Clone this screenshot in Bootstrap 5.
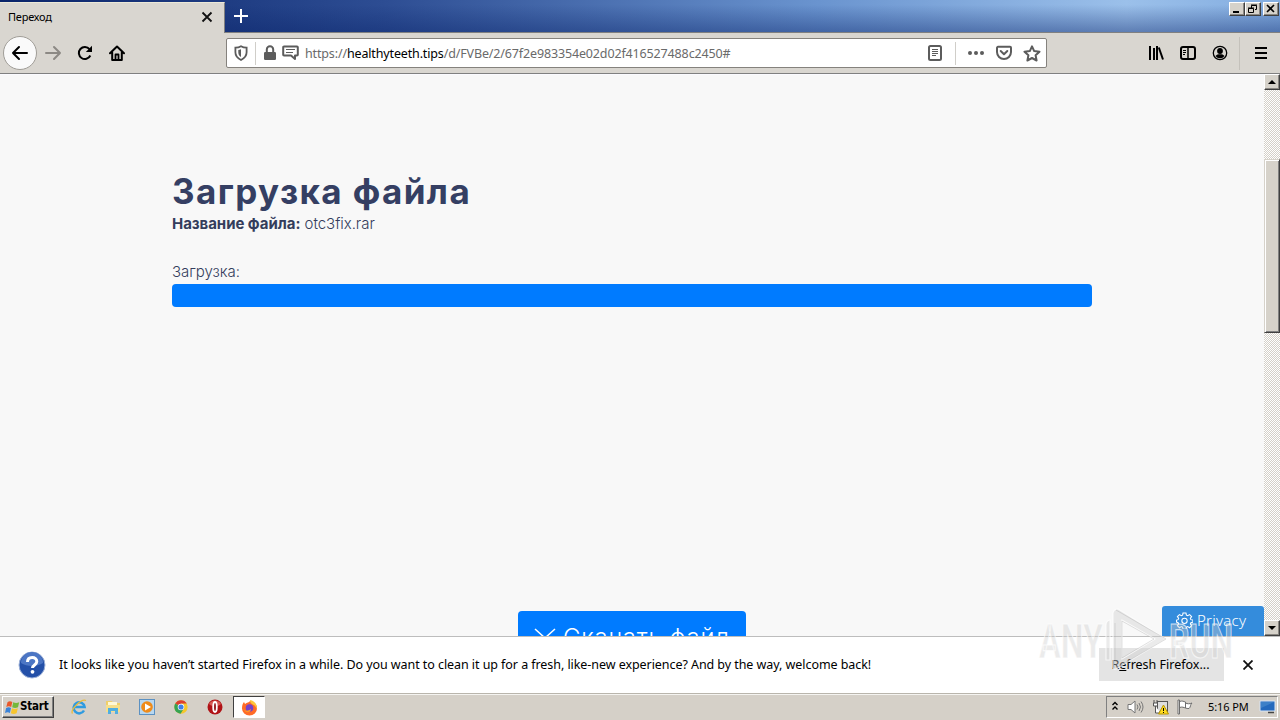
<!DOCTYPE html>
<html lang="ru">
<head>
    <meta charset="UTF-8">
    <title>Переход</title>
    <link href="https://cdn.jsdelivr.net/npm/bootstrap@5.3.3/dist/css/bootstrap.min.css" rel="stylesheet">
    <style>
        body {
            width: 1280px;
            height: 720px;
            background: #d9d6d0;
            color: #000;
            font-family: "Noto Sans", "Liberation Sans", sans-serif;
            font-size: 12px;
            line-height: 1.2;
        }
        svg {
            display: block;
            flex: none;
        }

        /* window title bar */
        .titlebar {
            height: 33px;
            background: linear-gradient(180deg, rgba(10,36,106,0) 15%, rgba(10,36,106,.42) 100%), linear-gradient(90deg, #0a246a, #2d4d93 30%, #6a94cf 64%, #9bc0ea 88%, #83ade0);
            border-bottom: 1px solid #808080;
        }
        .page-tab {
            width: 225px;
            height: 31px;
            margin-top: 2px;
            margin-bottom: -1px;
            padding: 0 11px 2px 8px;
            background: #d9d6d0;
            border-right: 1px solid #808080;
            border-top: 1px solid #ece9d8;
        }
        .tab-title {
            font-size: 11px;
            letter-spacing: -.2px;
        }
        .win-btns {
            margin: 2px 1px 0 0;
        }
        .win-btn, .scroll-btn {
            background: #d6d2ca;
            border: 1px solid;
            border-color: #fff #404040 #404040 #fff;
            box-shadow: inset -1px -1px #8a8782;
        }
        .win-btn {
            width: 16px;
            height: 14px;
        }
        .win-close {
            margin-left: 2px;
        }

        /* navigation bar */
        .toolbar {
            height: 41px;
            border-bottom: 1px solid #808080;
        }
        .back-btn {
            width: 34px;
            height: 34px;
            margin-left: 3px;
            border: 1px solid #a09d97;
            border-radius: 50%;
            background: #fafafa;
        }
        .forward-icon {
            margin-left: 7px;
        }
        .reload-icon {
            margin-left: 15px;
        }
        .url-bar {
            width: 821px;
            height: 30px;
            margin-left: 101px;
            padding: 0 5px 0 6px;
            background: #fff;
            border: 1px solid #85827d;
            border-radius: 2px;
            color: #6a6a6a;
        }
        .url-text {
            font-size: 12.5px;
            letter-spacing: -.145px;
            margin-left: 6px;
        }
        .sep {
            width: 1px;
            height: 23px;
            background: #d0cec9;
        }
        .sep-shield {
            margin: 0 6px;
        }
        .sep-actions {
            margin: 0 12px;
        }
        .pocket-icon {
            margin: 0 11px 0 12px;
        }
        .library-icon {
            margin-left: 101px;
        }
        .sep-menu {
            height: 33px;
            margin: 0 15px 0 11px;
            background: #c4c1bb;
        }

        /* page */
        .viewport {
            height: 562px;
        }
        .site {
            background: #f8f8f8;
            border-top: 1px solid #fbfbff;
            color: #343d5c;
            font-family: "Inter", "Open Sans", sans-serif;
            font-size: 15px;
            font-weight: 300;
        }
        .site-inner {
            width: 920px;
            padding-top: 95px;
        }
        .site h1 {
            margin: 0;
            font-size: 35px;
            font-weight: 700;
            letter-spacing: 1.4px;
            line-height: 42px;
            color: #353f63;
        }
        .file-line {
            line-height: 24px;
            letter-spacing: -.04px;
        }
        .load-bar {
            height: 23px;
            border-radius: 4px;
        }
        .load-bar .progress-bar {
            background: #007bff;
        }
        .download-btn {
            width: 228px;
            height: 54px;
            margin-top: 304px;
            padding: 0 15px;
            border: 0;
            border-radius: 4px;
            background: #007bff;
            color: #fff;
            font-size: 24px;
            font-weight: 300;
            letter-spacing: .75px;
            line-height: 54px;
        }
        .download-label {
            margin-left: 6px;
        }
        .privacy-tab {
            right: 0;
            bottom: 0;
            width: 102px;
            height: 30px;
            padding: 0 0 2px 14px;
            border-radius: 3px 3px 0 0;
            background: #348cdc;
            color: #fff;
            font-family: "Noto Sans", sans-serif;
            font-size: 15px;
            letter-spacing: .25px;
        }

        .scroll-track {
            width: 16px;
            background: repeating-conic-gradient(#d4d0c8 0 25%, #fff 0 50%) 0 0 / 2px 2px;
        }
        .scroll-btn {
            width: 16px;
            height: 16px;
        }
        .scroll-thumb {
            height: 174px;
            margin-top: 69px;
            background: #d6d2ca;
            border: 1px solid;
            border-color: #d6d2ca #404040 #404040 #d6d2ca;
            box-shadow: inset 1px 1px #fff, inset -1px -1px #808080;
        }

        /* notification */
        .notice {
            height: 57px;
            background: #fff;
            border-top: 1px solid #bdbdbd;
            padding: 0 27px 1px 18px;
        }
        .notice-text {
            margin-left: 13px;
            font-size: 12.5px;
            letter-spacing: -.062px;
        }
        .refresh-btn {
            width: 125px;
            height: 33px;
            margin-right: 19px;
            padding-right: 2px;
            background: #e4e4e4;
            font-size: 12.5px;
        }

        /* taskbar */
        .taskbar {
            height: 27px;
            background: #d5d0c8;
            border-top: 1px solid #b9b5ac;
            box-shadow: inset 0 1px #f5f4f1;
            padding: 2px 2px 0;
        }
        .start-btn {
            width: 52px;
            height: 22px;
            padding-left: 2px;
            border: 1px solid;
            border-color: #fff #404040 #404040 #fff;
            box-shadow: inset -1px -1px #808080;
            font-family: "DejaVu Sans Condensed", "DejaVu Sans", sans-serif;
            font-weight: 700;
            font-size: 11.5px;
            letter-spacing: -.2px;
        }
        .quick-launch {
            height: 21px;
            margin: 0 10px 0 17px;
            gap: 18px;
        }
        .active-task {
            width: 32px;
            height: 22px;
            background: #fff;
            border: 1px solid;
            border-color: #404040 #fff #fff #404040;
        }
        .tray {
            width: 172px;
            height: 22px;
            padding: 0 1px 0 4px;
            gap: 8px;
            border: 1px solid;
            border-color: #808080 #fff #fff #808080;
        }
        .clock {
            margin-left: 7px;
            font-size: 11px;
            letter-spacing: -.1px;
        }

        .brand-mark {
            left: 1034px;
            top: 606px;
            pointer-events: none;
        }
    </style>
</head>
<body class="d-flex flex-column overflow-hidden position-relative">

<header class="titlebar d-flex flex-shrink-0">
    <div class="page-tab d-flex align-items-center justify-content-between">
        <span class="tab-title">Переход</span>
        <svg width="12" height="12" viewBox="0 0 12 12" fill="none" stroke="#111" stroke-width="1.800"><path d="M1.500 1.500l9 9M10.500 1.500l-9 9"/></svg>
    </div>
    <svg class="ms-2 mt-2" width="16" height="16" viewBox="0 0 16 16" stroke="#fff" stroke-width="2"><path d="M8 1v14M1 8h14"/></svg>
    <div class="win-btns d-flex ms-auto">
        <div class="win-btn"><svg width="14" height="12"><path d="M3 9h6" stroke="#000" stroke-width="2"/></svg></div>
        <div class="win-btn"><svg width="14" height="12" fill="none" stroke="#000"><path d="M5.500 5V2.500h5v4H9M5 2h6M2.500 5.500h5v4h-5zM2 5h6"/></svg></div>
        <div class="win-btn win-close"><svg width="14" height="12"><path d="M3 2l7 7M10 2l-7 7" stroke="#000" stroke-width="1.600"/></svg></div>
    </div>
</header>

<nav class="toolbar d-flex align-items-center flex-shrink-0">
    <div class="back-btn d-flex align-items-center justify-content-center">
        <svg width="18" height="16" viewBox="0 0 18 16" fill="none" stroke="#000" stroke-width="2" stroke-linecap="round" stroke-linejoin="round"><path d="M16 8H2M8 2L2 8l6 6"/></svg>
    </div>
    <svg class="forward-icon" width="18" height="16" viewBox="0 0 18 16" fill="none" stroke="#8c8984" stroke-width="2" stroke-linecap="round" stroke-linejoin="round"><path d="M2 8h14M10 2l6 6-6 6"/></svg>
    <svg class="reload-icon" width="16" height="16" viewBox="0 0 16 16" fill="none" stroke="#000" stroke-width="2"><path d="M13.300 10.500A6 6 0 1 1 12.500 4.200"/><path d="M15 .8v6.200H8.800z" fill="#000" stroke="none"/></svg>
    <svg class="ms-3" width="16" height="16" viewBox="0 0 16 16" fill="none" stroke="#000" stroke-width="2" stroke-linecap="round" stroke-linejoin="round"><path d="M1 8.300L8 1.500l7 6.800M3.200 7.500V15h9.600V7.500"/><path d="M6.500 14V9.500h3V14" stroke-width="1.800"/></svg>
    <div class="url-bar d-flex align-items-center">
        <svg width="16" height="16" viewBox="0 0 16 16" fill="none" stroke="#5c5c5c" stroke-width="1.800"><path d="M8 1.200C6 2.500 4 2.700 2.400 2.700v4.600C2.400 11 5 13.500 8 15c3-1.500 5.600-4 5.600-7.700V2.700C12 2.700 10 2.500 8 1.200z"/><path d="M8 4.200C7 4.800 6 5 5.300 5v2.500C5.300 9.500 6.500 11 8 12z" fill="#5c5c5c" stroke="none"/></svg>
        <div class="sep sep-shield"></div>
        <svg width="16" height="16" viewBox="0 0 16 16"><rect x="2" y="7" width="12" height="8" rx="1.200" fill="#5c5c5c"/><path d="M4.800 8V4.500a3.200 3.200 0 0 1 6.400 0V8" fill="none" stroke="#5c5c5c" stroke-width="2"/></svg>
        <svg class="ms-1" width="17" height="16" viewBox="0 0 17 16" fill="none" stroke="#5c5c5c" stroke-width="2" stroke-linejoin="round"><path d="M2 1.500h13a.8.8 0 0 1 .8.800v7.400a.8.800 0 0 1-.8.800h-2V14l-4-3.500H2a.8.8 0 0 1-.8-.8V2.300A.8.8 0 0 1 2 1.500z"/><path d="M4 4.500h9M4 7.500h7" stroke-width="1"/></svg>
        <span class="url-text">https://<span class="text-black">healthyteeth.tips</span>/d/FVBe/2/67f2e983354e02d02f416527488c2450#</span>
        <svg class="ms-auto" width="16" height="16" viewBox="0 0 16 16" fill="none" stroke="#5c5c5c"><rect x="2" y="1" width="12" height="14" rx="1.500" stroke-width="2"/><path d="M5 4.500h6M5 6.500h6M5 8.500h6M5 10.500h4"/></svg>
        <div class="sep sep-actions"></div>
        <svg width="16" height="16" fill="#5c5c5c"><circle cx="2" cy="8" r="2"/><circle cx="8" cy="8" r="2"/><circle cx="14" cy="8" r="2"/></svg>
        <svg class="pocket-icon" width="16" height="16" viewBox="0 0 16 16" fill="none" stroke="#5c5c5c" stroke-width="2" stroke-linecap="round" stroke-linejoin="round"><path d="M2 1.800h12a1 1 0 0 1 1 1V7a7 7 0 0 1-14 0V2.800a1 1 0 0 1 1-1z"/><path d="M4.700 6L8 9.200 11.300 6"/></svg>
        <svg width="18" height="17" viewBox="0 0 18 17" fill="none" stroke="#5c5c5c" stroke-width="2" stroke-linejoin="round"><path d="M9 1.300l2.200 4.800 5.300.6-3.900 3.600 1 5.200L9 13l-4.600 2.500 1-5.200L1.500 6.700l5.300-.6z"/></svg>
    </div>
    <svg class="library-icon" width="16" height="16" viewBox="0 0 16 16" fill="none" stroke="#000" stroke-width="2"><path d="M2 1v14M6 3v12M9 1v14"/><path d="M10.800 2.500l4.200 12"/></svg>
    <svg class="ms-3" width="16" height="16" viewBox="0 0 16 16" fill="none" stroke="#000"><rect x="1" y="2" width="14" height="12" rx="2" stroke-width="2"/><path d="M8 2v12" stroke-width="1.500"/><path d="M3 5.500h3M3 7.500h3M3 9.500h2"/></svg>
    <svg class="ms-3" width="16" height="16" viewBox="0 0 16 16"><circle cx="8" cy="8" r="6.700" fill="none" stroke="#000" stroke-width="1.300"/><circle cx="8" cy="6" r="2.900"/><path d="M3.500 11c1-1.300 2.500-1.700 4.500-1.700s3.500.4 4.500 1.700A5.300 5.300 0 0 1 8 13.200 5.300 5.300 0 0 1 3.500 11z"/></svg>
    <div class="sep sep-menu"></div>
    <svg width="12" height="14" stroke="#000" stroke-width="2"><path d="M0 2h12M0 7h12M0 12h12"/></svg>
</nav>

<div class="viewport d-flex flex-shrink-0 overflow-hidden">
    <main class="site flex-grow-1 position-relative overflow-hidden">
        <div class="site-inner mx-auto">
            <h1>Загрузка файла</h1>
            <div class="file-line"><b class="fw-bold">Название файла:</b> otc3fix.rar</div>
            <div class="file-line mt-4">Загрузка:</div>
            <div class="progress load-bar"><div class="progress-bar w-100"></div></div>
            <button class="download-btn d-flex align-items-center mx-auto text-nowrap">
                <svg width="24" height="24" viewBox="0 0 24 24" fill="none" stroke="#fff" stroke-width="1.500"><path d="M2 3l10 9L22 3M2 12l10 9 10-9M5 10v4M19 10v4"/></svg>
                <span class="download-label">Скачать файл</span>
            </button>
        </div>
        <div class="privacy-tab position-absolute d-flex align-items-center">
            <svg width="17" height="17" viewBox="0 0 16 16" fill="none" stroke="#fff"><path d="M6.600 1h2.800l.4 2 1.200.5 1.800-1.100 1.900 1.900-1.200 1.700.5 1.200 2 .4v1.900l-2 .5-.5 1.200 1.200 1.700-1.900 1.900-1.800-1.100-1.200.5-.4 2H6.600l-.4-2-1.200-.5-1.700 1.100-2-1.900 1.200-1.700L2 10 .5 9.500V7.600l1.500-.4L2.500 6 1.300 4.300l2-1.900L5 3.500 6.200 3z"/><circle cx="8" cy="8.300" r="2.500"/></svg>
            <span class="ms-1">Privacy</span>
        </div>
    </main>
    <div class="scroll-track d-flex flex-column flex-shrink-0">
        <div class="scroll-btn"><svg width="14" height="14"><path d="M3 9h8L7 5z"/></svg></div>
        <div class="scroll-thumb"></div>
        <div class="scroll-btn mt-auto"><svg width="14" height="14"><path d="M3 5h8L7 9z"/></svg></div>
    </div>
</div>

<div class="notice d-flex align-items-center flex-shrink-0">
    <svg width="28" height="28" viewBox="0 0 28 28"><circle cx="14" cy="14" r="13" fill="#2450a8" stroke="#9eb2d8"/><path d="M3 12a11 11 0 0 1 22 0c-6 4-16 4-22 0z" fill="#4c76c4"/><path d="M9.500 11c0-3 2-4.500 4.700-4.500s4.600 1.600 4.600 4c0 3.500-4.300 3.300-4.300 6.500" fill="none" stroke="#fff" stroke-width="3"/><circle cx="14.500" cy="20.800" r="1.900" fill="#fff"/></svg>
    <span class="notice-text text-nowrap">It looks like you haven’t started Firefox in a while. Do you want to clean it up for a fresh, like-new experience? And by the way, welcome back!</span>
    <div class="refresh-btn d-flex align-items-center justify-content-center ms-auto">R<u>e</u>fresh Firefox...</div>
    <svg width="10" height="10" stroke="#111" stroke-width="1.800"><path d="M.5.5l9 9M9.500.5l-9 9"/></svg>
</div>

<footer class="taskbar d-flex flex-shrink-0">
    <div class="start-btn d-flex align-items-center">
        <svg width="15" height="15" viewBox="0 0 15 15"><path d="M2.500 2.300C4 1 5.500 1 7.300 2L6.200 7C4.600 6 3 6 1.300 7z" fill="#e9582b"/><path d="M8.200 2.300c2 1 3.800 1 6 0L13 7.200c-2 1-3.800 1-5.800 0z" fill="#75b83b"/><path d="M1.100 8C3 7 4.500 7 6 8l-1.100 5C3.500 12 1.800 12 0 13z" fill="#3a83d8"/><path d="M7 8.200c2 1 3.800 1 5.800 0l-1.200 5c-2 1-3.800 1-5.800 0z" fill="#f7c52d"/></svg>
        <span>Start</span>
    </div>
    <div class="quick-launch d-flex align-items-center">
        <svg width="16" height="16" viewBox="0 0 16 16" fill="none"><path d="M13 11.500A5.500 5.500 0 1 1 13.600 8H4" stroke="#2f9be0" stroke-width="2.500"/><path d="M1.500 14.500C-1 11 10-.5 15 1.500" stroke="#e9bb3c" stroke-width="1.300"/></svg>
        <svg width="16" height="16" viewBox="0 0 16 16"><path d="M1 2h6l1 2h7v9H1z" fill="#efcf6a"/><path d="M3 3h9v4H3z" fill="#fff8d5"/><path d="M1 6h14v7H1z" fill="#f6df8b"/><path d="M3 15V9h10v6h-3v-3H6v3z" fill="#51aee0"/></svg>
        <svg width="16" height="16" viewBox="0 0 16 16"><rect x=".5" y=".5" width="15" height="15" fill="#b8d7f0" stroke="#5c91c2"/><circle cx="8" cy="8" r="5.800" fill="#ef8b1a"/><path d="M6 4.500l6 3.500-6 3.500z" fill="#fff"/></svg>
        <svg width="16" height="16" viewBox="-1 -1 18 18"><circle cx="8" cy="8" r="7.500" fill="#f5c72c"/><path d="M8 8L1.500 4.200A7.500 7.500 0 0 1 14.500 4.200H8z" fill="#dc3e31"/><path d="M8 8L1.500 4.200A7.500 7.500 0 0 0 7.500 15.500l3.700-5.700z" fill="#36a353"/><circle cx="8" cy="8" r="3.700" fill="#fff"/><circle cx="8" cy="8" r="2.900" fill="#3f7fe8"/></svg>
        <svg width="16" height="16" viewBox="0 0 16 16"><circle cx="8" cy="8" r="7.500" fill="#b01216"/><path d="M2 5a7 7 0 0 1 12 0c-3 3-9 3-12 0z" fill="#d85a55"/><ellipse cx="8" cy="8" rx="1.800" ry="5" fill="#8c0b10" stroke="#fff" stroke-width="1.800"/></svg>
    </div>
    <div class="active-task d-flex align-items-center justify-content-center">
        <svg width="17" height="17" viewBox="0 0 17 17"><path d="M1 9c0-3 1-5 2-6l1 2c2-2 4-1 5-3 4 1 7 3 7 7.500a7.500 7 0 0 1-15 0z" fill="#ff6b27"/><path d="M9 1c5 1 7.500 5 6.800 9-1-2-2-4-4-4.500C10 5 9 3 9 1z" fill="#ffc83a"/><circle cx="8.500" cy="9" r="3.800" fill="#7543c9"/><path d="M2 9c2 4 5 3 8 1 0 4-6 5-8-1z" fill="#ff9527"/></svg>
    </div>
    <div class="tray d-flex align-items-center ms-auto">
        <svg width="8" height="12" fill="none" stroke="#000" stroke-width="1.400"><path d="M1.500 4L4 1.500 6.500 4M1.500 8.500L4 6l2.500 2.500"/></svg>
        <svg class="ms-0" width="17" height="16" viewBox="0 0 17 16" fill="none" stroke="#777"><path d="M1 5.500h3L8 2v12l-4-3.500H1z" fill="#fff"/><path d="M10 5.500q2 2.500 0 5M12 4q3 4 0 8M14 2.500q4 5.500 0 11"/></svg>
        <svg width="17" height="16" viewBox="0 0 17 16"><rect x="5.500" y="2.500" width="10" height="10" fill="#dedede" stroke="#555"/><path d="M2 1v3M5 1v3M1.500 4h4v3h-4zM3.500 7v7h5" fill="#fff" stroke="#555"/><path d="M11.500 6l5 9h-10z" fill="#ffdc20" stroke="#b89500"/><path d="M11.500 9v3M11.500 13v1" stroke="#000"/></svg>
        <svg width="16" height="16" viewBox="0 0 16 16" fill="#fff" stroke="#6d6d6d"><path d="M1 1h1.500v14H1zM2.500 2.500c3-1 4 0 6 .5v6c-2-.5-3-1.500-6-.5zM8.500 4c2 1 4 1 6.500 0-2 1.500-1 4-3 5.500-1.500 0-2.500 0-3.500-.5z"/></svg>
        <span class="clock text-nowrap">5:16 PM</span>
        <svg class="ms-auto" width="17" height="16" viewBox="0 0 17 16"><path d="M1 2h15v10H1z" fill="#2469bd" stroke="#d9e5f3"/><path d="M2 3h13L2 9z" fill="#3d80c8"/><path d="M9 13.500h6" stroke="#444" stroke-width="1.500"/></svg>
    </div>
</footer>

<svg class="brand-mark position-absolute" width="204" height="66" viewBox="0 0 204 66">
    <g fill="#ccc" fill-opacity=".4" stroke="#fff" stroke-opacity=".7" stroke-width="1.200" font-family="Roboto, sans-serif" font-weight="700" font-size="48">
        <text x="5" y="52" textLength="64" lengthAdjust="spacingAndGlyphs">ANY</text>
        <text x="135" y="52" textLength="64" lengthAdjust="spacingAndGlyphs">RUN</text>
        <path fill-rule="evenodd" d="M84 3l48 30-50 30q-3 1-3-3V7q1-4 5-4zM88 14v39l33-20z"/>
        <path d="M76 14v40h-4V19q0-4 4-5z"/>
    </g>
    <path d="M82 4l50 29-50 29M81 17v39M88 15v37l32-19z" fill="none" stroke="#a5a5a5" stroke-opacity=".35"/>
</svg>

<script src="https://cdn.jsdelivr.net/npm/bootstrap@5.3.3/dist/js/bootstrap.bundle.min.js"></script>
</body>
</html>
